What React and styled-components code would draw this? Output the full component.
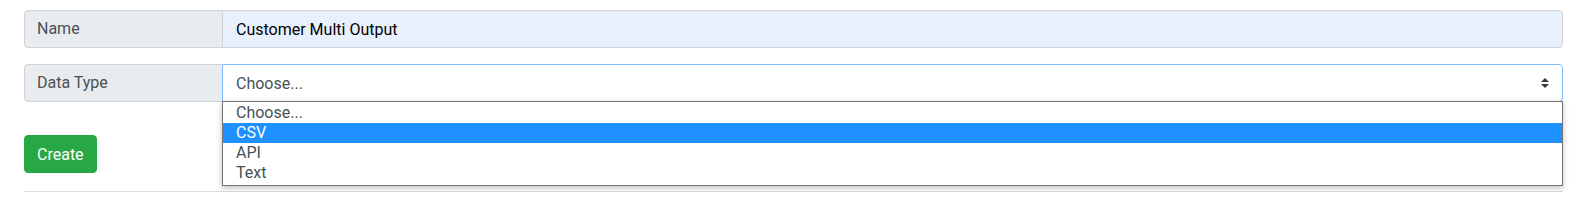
import styled, { createGlobalStyle } from "styled-components";

const GlobalStyle = createGlobalStyle`
  body {
    margin: 0;
    background: #fff;
    font-family: Roboto, "Liberation Sans", sans-serif;
    font-size: 16px;
    color: #212529;
  }
`;

const Form = styled.div`
  padding: 10px 16px 0 24px;
`;

const InputGroup = styled.div`
  position: relative;
  display: flex;
  height: 38px;
  margin-bottom: 16px;
`;

const Label = styled.div`
  flex: 0 0 199px;
  box-sizing: border-box;
  display: flex;
  align-items: center;
  padding: 0 12px;
  background: #e9ecef;
  border: 1px solid #ced4da;
  border-radius: 4px 0 0 4px;
  color: #495057;
  line-height: 1.5;
`;

const Field = styled.div`
  flex: 1;
  box-sizing: border-box;
  display: flex;
  align-items: center;
  justify-content: space-between;
  padding: 0 12px 0 13px;
  margin-left: -1px;
  border: 1px solid ${({ $focused }) => ($focused ? "#80bdff" : "#ced4da")};
  border-radius: 0 4px 4px 0;
  background: ${({ $autofill }) => ($autofill ? "#e8f0fe" : "#fff")};
  color: ${({ $autofill }) => ($autofill ? "#000" : "#495057")};
`;

const Arrows = styled.svg`
  width: 8px;
  height: 10px;
  margin-right: 1px;
`;

const Listbox = styled.ul`
  position: absolute;
  top: 37px;
  left: 198px;
  right: 0;
  margin: 0;
  padding: 1px 0 2px;
  list-style: none;
  background: #fff;
  border: 1px solid #767676;
  box-shadow: 0 2px 6px rgba(0, 0, 0, 0.25);
  z-index: 2;
`;

const Option = styled.li`
  height: 20px;
  line-height: 20px;
  padding: 0 13px;
  background: ${({ $selected }) => ($selected ? "#1e90ff" : "transparent")};
  color: ${({ $selected }) => ($selected ? "#fff" : "#495057")};
`;

const Button = styled.button`
  margin-top: 17px;
  height: 38px;
  padding: 0 12px;
  border: 1px solid #28a745;
  border-radius: 4px;
  background: #28a745;
  color: #fff;
  font-family: inherit;
  font-size: 16px;
`;

const Rule = styled.hr`
  margin: 18px 0 0;
  border: 0;
  border-top: 1px solid #dcdcdc;
`;

const options = ["Choose...", "CSV", "API", "Text"];

export default function App() {
  return (
    <>
      <GlobalStyle />
      <Form>
        <InputGroup>
          <Label>Name</Label>
          <Field $autofill>Customer Multi Output</Field>
        </InputGroup>
        <InputGroup>
          <Label>Data Type</Label>
          <Field $focused>
            <span>Choose...</span>
            <Arrows viewBox="0 0 8 10">
              <path d="M4 0L8 4H0z M4 10L0 6H8z" fill="#343a40" />
            </Arrows>
          </Field>
          <Listbox>
            {options.map((o) => (
              <Option key={o} $selected={o === "CSV"}>
                {o}
              </Option>
            ))}
          </Listbox>
        </InputGroup>
        <Button>Create</Button>
        <Rule />
      </Form>
    </>
  );
}
